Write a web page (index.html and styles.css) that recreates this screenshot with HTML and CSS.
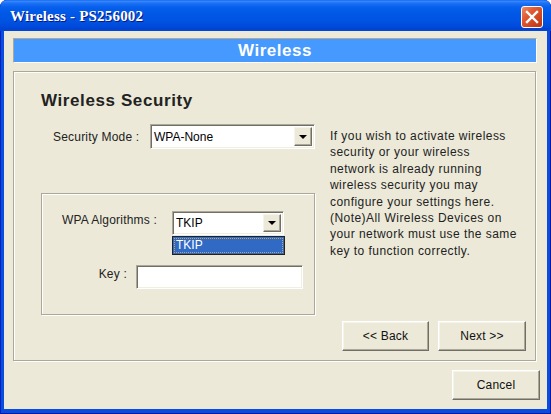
FILE: index.html
```html
<!DOCTYPE html>
<html>
<head>
<meta charset="utf-8">
<title>Wireless - PS256002</title>
<link rel="stylesheet" href="styles.css">
</head>
<body>
<div class="window">
  <div class="titlebar">
    <span class="title">Wireless - PS256002</span>
    <div class="close">
      <svg width="14" height="14" viewBox="0 0 14 14"><path d="M2 2 L12 12 M12 2 L2 12" stroke="#fff" stroke-width="2.4" stroke-linecap="square"/></svg>
    </div>
  </div>
  <div class="client">
    <div class="banner">Wireless</div>
    <div class="panel">
      <h1 class="heading">Wireless Security</h1>
      <div class="panel-body">
        <div class="left">
          <div class="mode-row">
            <span class="label">Security Mode :</span>
            <div class="combo combo-wide">
              <span class="combo-text">WPA-None</span>
              <span class="drop"><span class="arrow"></span></span>
            </div>
          </div>
          <div class="group">
            <div class="algo-row">
              <span class="label algo-label">WPA Algorithms :</span>
              <div class="combo-wrap">
                <div class="combo combo-small">
                  <span class="combo-text">TKIP</span>
                  <span class="drop"><span class="arrow"></span></span>
                </div>
                <div class="list"><span class="list-item">TKIP</span></div>
              </div>
            </div>
            <div class="key-row">
              <span class="label key-label">Key :</span>
              <div class="input"></div>
            </div>
          </div>
        </div>
        <p class="help">If you wish to activate wireless<br>security or your wireless<br>network is already running<br>wireless security you may<br>configure your settings here.<br>(Note)All Wireless Devices on<br>your network must use the same<br>key to function correctly.</p>
      </div>
      <div class="nav">
        <div class="btn btn-back">&lt;&lt; Back</div>
        <div class="btn btn-next">Next &gt;&gt;</div>
      </div>
    </div>
    <div class="footer">
      <div class="btn btn-cancel">Cancel</div>
    </div>
  </div>
</div>
</body>
</html>
```

FILE: styles.css
```css
* { box-sizing: border-box; }
html, body { margin: 0; padding: 0; background: #fff; }
body { font-family: "Liberation Sans", Arial, sans-serif; font-size: 12px; color: #1a1a1a; }

.window {
  width: 551px;
  height: 414px;
  border-radius: 7px 7px 0 0;
  background: #0A4BE0;
  box-shadow: inset 1px 0 #0022B8, inset -1px 0 #0019A0, inset 0 -1px #001A98;
  display: flex;
  flex-direction: column;
  overflow: hidden;
}

.titlebar {
  height: 31px;
  flex: none;
  display: flex;
  align-items: center;
  justify-content: space-between;
  padding: 0 8px 0 10px;
  border-radius: 7px 7px 0 0;
  background: linear-gradient(to bottom, #0A5CEF 0, #3B8CFF 1px, #1E72F5 3px, #0660EC 7px, #0057E6 14px, #0054E3 20px, #004BDC 26px, #0042D2 29px, #0048D9 31px);
}
.title {
  font-family: "Liberation Serif", "Times New Roman", serif;
  font-weight: bold;
  font-size: 15px;
  letter-spacing: 0.2px;
  color: #fff;
  text-shadow: 1px 1px 0 #0A1883;
  margin-top: 1px;
}
.close {
  width: 22px;
  height: 22px;
  margin-top: 2px;
  border: 1px solid #fff;
  border-radius: 3px;
  background: linear-gradient(135deg, #EE8A6A 0%, #E05A32 35%, #CF4420 70%, #B8360F 100%);
  display: flex;
  align-items: center;
  justify-content: center;
}

.client {
  flex: 1;
  margin: 0 4px 5px 4px;
  background: #ECE9D8;
  padding: 7px 10px 0 9px;
  display: flex;
  flex-direction: column;
}

.banner {
  height: 25px;
  background: #4599FF;
  border: 1px solid;
  border-color: #ACA899 #fff #fff #ACA899;
  color: #fff;
  font-weight: bold;
  font-size: 17px;
  letter-spacing: 0.5px;
  text-align: center;
  line-height: 23px;
}

.panel {
  margin-top: 8px;
  width: 523px;
  height: 290px;
  border: 1px solid #ACA899;
  box-shadow: inset 1px 1px 0 #fff, 1px 1px 0 #fff;
  display: flex;
  flex-direction: column;
}

.heading {
  margin: 19px 0 0 27px;
  font-size: 17px;
  line-height: 20px;
  font-weight: bold;
  letter-spacing: 0.6px;
  color: #222;
}

.panel-body {
  margin-top: 13px;
  display: flex;
}
.left {
  margin-left: 27px;
  width: 274px;
}
.mode-row {
  height: 25px;
  display: flex;
  align-items: center;
  justify-content: space-between;
  padding-left: 12px;
}
.label { color: #222; white-space: nowrap; letter-spacing: 0.2px; }

.combo {
  position: relative;
  background: #fff;
  border: 1px solid;
  border-color: #ACA899 #fff #fff #ACA899;
  box-shadow: inset 1px 1px 0 #716F64, inset -1px -1px 0 #F1EFE2;
  display: flex;
  align-items: center;
  padding: 2px;
}
.combo-wide { width: 165px; height: 25px; }
.combo-small { width: 112px; height: 24px; }
.combo-text { flex: 1; padding-left: 1px; color: #000; }
.drop {
  width: 18px;
  height: 100%;
  background: #ECE9D8;
  border: 1px solid;
  border-color: #F5F4EA #716F64 #716F64 #F5F4EA;
  box-shadow: inset -1px -1px 0 #ACA899;
  display: flex;
  align-items: center;
  justify-content: center;
}
.arrow {
  width: 0;
  height: 0;
  border-left: 4px solid transparent;
  border-right: 4px solid transparent;
  border-top: 4px solid #000;
}

.group {
  margin-top: 44px;
  height: 122px;
  border: 1px solid #ACA899;
  box-shadow: inset 1px 1px 0 #fff, 1px 1px 0 #fff;
  padding-top: 17px;
}
.algo-row {
  display: flex;
  align-items: flex-start;
  padding-left: 20px;
}
.algo-label { margin-top: 2px; width: 110px; }
.combo-wrap { position: relative; }
.list {
  position: absolute;
  left: 0;
  top: 25px;
  width: 113px;
  height: 19px;
  background: #316AC5;
  border: 1px solid #222;
  padding: 1px;
}
.list-item {
  display: block;
  height: 100%;
  border: 1px dotted #C9A35A;
  color: #fff;
  line-height: 13px;
  padding-left: 1px;
}

.key-row {
  margin-top: 30px;
  display: flex;
  align-items: flex-start;
}
.key-label {
  width: 85px;
  text-align: right;
  margin-top: 2px;
  margin-right: 9px;
}
.input {
  width: 167px;
  height: 24px;
  background: #fff;
  border: 1px solid;
  border-color: #ACA899 #fff #fff #ACA899;
  box-shadow: inset 1px 1px 0 #716F64, inset -1px -1px 0 #F1EFE2;
}

.help {
  margin: 4px 0 0 15px;
  line-height: 16.4px;
  letter-spacing: 0.45px;
  color: #222;
  white-space: nowrap;
}

.nav {
  margin-top: auto;
  margin-bottom: 9px;
  padding-right: 9px;
  display: flex;
  justify-content: flex-end;
  gap: 9px;
}
.btn {
  height: 30px;
  background: #ECE9D8;
  border: 1px solid;
  border-color: #fff #716F64 #716F64 #fff;
  box-shadow: inset -1px -1px 0 #ACA899, inset 1px 1px 0 #F5F4EA;
  color: #111;
  letter-spacing: 0.2px;
  display: flex;
  align-items: center;
  justify-content: center;
  white-space: nowrap;
}
.btn-back { width: 87px; }
.btn-next { width: 88px; }
.btn-cancel { width: 88px; }

.footer {
  margin-top: 9px;
  margin-right: -3px;
  display: flex;
  justify-content: flex-end;
}
```
